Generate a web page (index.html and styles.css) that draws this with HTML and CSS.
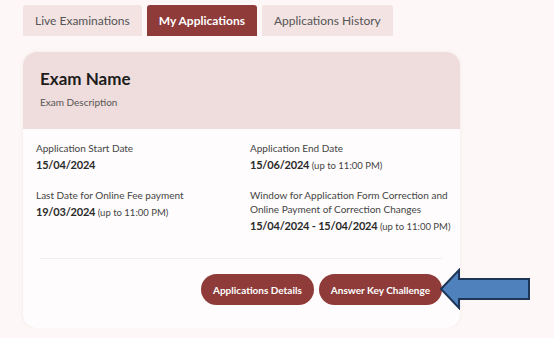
FILE: index.html
```html
<!DOCTYPE html>
<html lang="en">
  <head>
    <meta charset="UTF-8" />
    <meta name="viewport" content="width=device-width, initial-scale=1.0" />
    <title>My Applications</title>
    <link rel="stylesheet" href="styles.css">
  </head>
  <body>
    <div class="page">
      <div class="tabs">
        <button class="tab">Live Examinations</button>
        <button class="tab active">My Applications</button>
        <button class="tab">Applications History</button>
      </div>

      <div class="card">
        <div class="card-header">
          <h2>Exam Name</h2>
          <p class="description">Exam Description</p>
        </div>

        <div class="card-body">
          <div class="dates">
            <div class="date-item">
              <div class="label">Application Start Date</div>
              <div class="value">15/04/2024</div>
            </div>
            <div class="date-item">
              <div class="label">Application End Date</div>
              <div class="value">15/06/2024 <span class="note">(up to 11:00 PM)</span></div>
            </div>
            <div class="date-item">
              <div class="label">Last Date for Online Fee payment</div>
              <div class="value">19/03/2024 <span class="note">(up to 11:00 PM)</span></div>
            </div>
            <div class="date-item">
              <div class="label">Window for Application Form Correction and Online Payment of Correction Changes</div>
              <div class="value">15/04/2024 - 15/04/2024 <span class="note">(up to 11:00 PM)</span></div>
            </div>
          </div>

          <div class="actions">
            <button class="pill">Applications Details</button>
            <button class="pill">Answer Key Challenge</button>
            <svg class="arrow" width="94" height="42" viewBox="0 0 94 42">
              <path d="M2 21 L20 2 L20 11 L90 11 L90 31 L20 31 L20 40 Z"
                fill="#4f81bd" stroke="#1d3557" stroke-width="2" stroke-linejoin="miter" />
            </svg>
          </div>
        </div>
      </div>
    </div>
  </body>
</html>
```

FILE: styles.css
```css
* {
  box-sizing: border-box;
  margin: 0;
  padding: 0;
}

body {
  font-family: "Lato", "Noto Sans", sans-serif;
  background-color: #fdf8f7;
  color: #222;
}

.page {
  padding: 5px 0 0 23px;
}

.tabs {
  display: flex;
  gap: 5px;
}

.tab {
  height: 31px;
  padding: 0 12px;
  border: none;
  border-radius: 3px 3px 0 0;
  background-color: #f3e3e3;
  color: #555;
  font-family: inherit;
  font-size: 12px;
}

.tab.active {
  background-color: #8e3b39;
  color: #fff;
  font-weight: 700;
}

.card {
  width: 437px;
  margin-top: 16px;
  background-color: #fefcfc;
  border-radius: 14px;
  box-shadow: 0 0 4px rgba(120, 60, 60, 0.08);
}

.card-header {
  height: 77px;
  padding: 16px 17px 0;
  background-color: #efdcdc;
  border-radius: 14px 14px 0 0;
}

.card-header h2 {
  font-size: 17px;
  font-weight: 700;
  color: #1d1d1d;
  line-height: 22px;
}

.description {
  margin-top: 6px;
  font-size: 10px;
  color: #555;
}

.card-body {
  padding: 12px 6px 23px 13px;
}

.dates {
  display: grid;
  grid-template-columns: 214px 1fr;
  row-gap: 14px;
}

.label {
  font-size: 10px;
  line-height: 14px;
  color: #444;
}

.value {
  margin-top: 2px;
  font-size: 11px;
  font-weight: 700;
  letter-spacing: -0.2px;
  line-height: 16px;
  color: #2a2a2a;
}

.note {
  font-size: 9.5px;
  font-weight: 400;
  letter-spacing: 0;
  color: #444;
}

.actions {
  position: relative;
  display: flex;
  justify-content: flex-end;
  gap: 5px;
  margin: 23px 12px 0 4px;
  padding-top: 15px;
  border-top: 1px solid #f3ecec;
}

.pill {
  height: 31px;
  padding: 0 12px;
  border: none;
  border-radius: 16px;
  background-color: #8e3b39;
  color: #fff;
  font-family: inherit;
  font-size: 10px;
  font-weight: 700;
}

.arrow {
  position: absolute;
  right: -91px;
  top: 9px;
}
```
